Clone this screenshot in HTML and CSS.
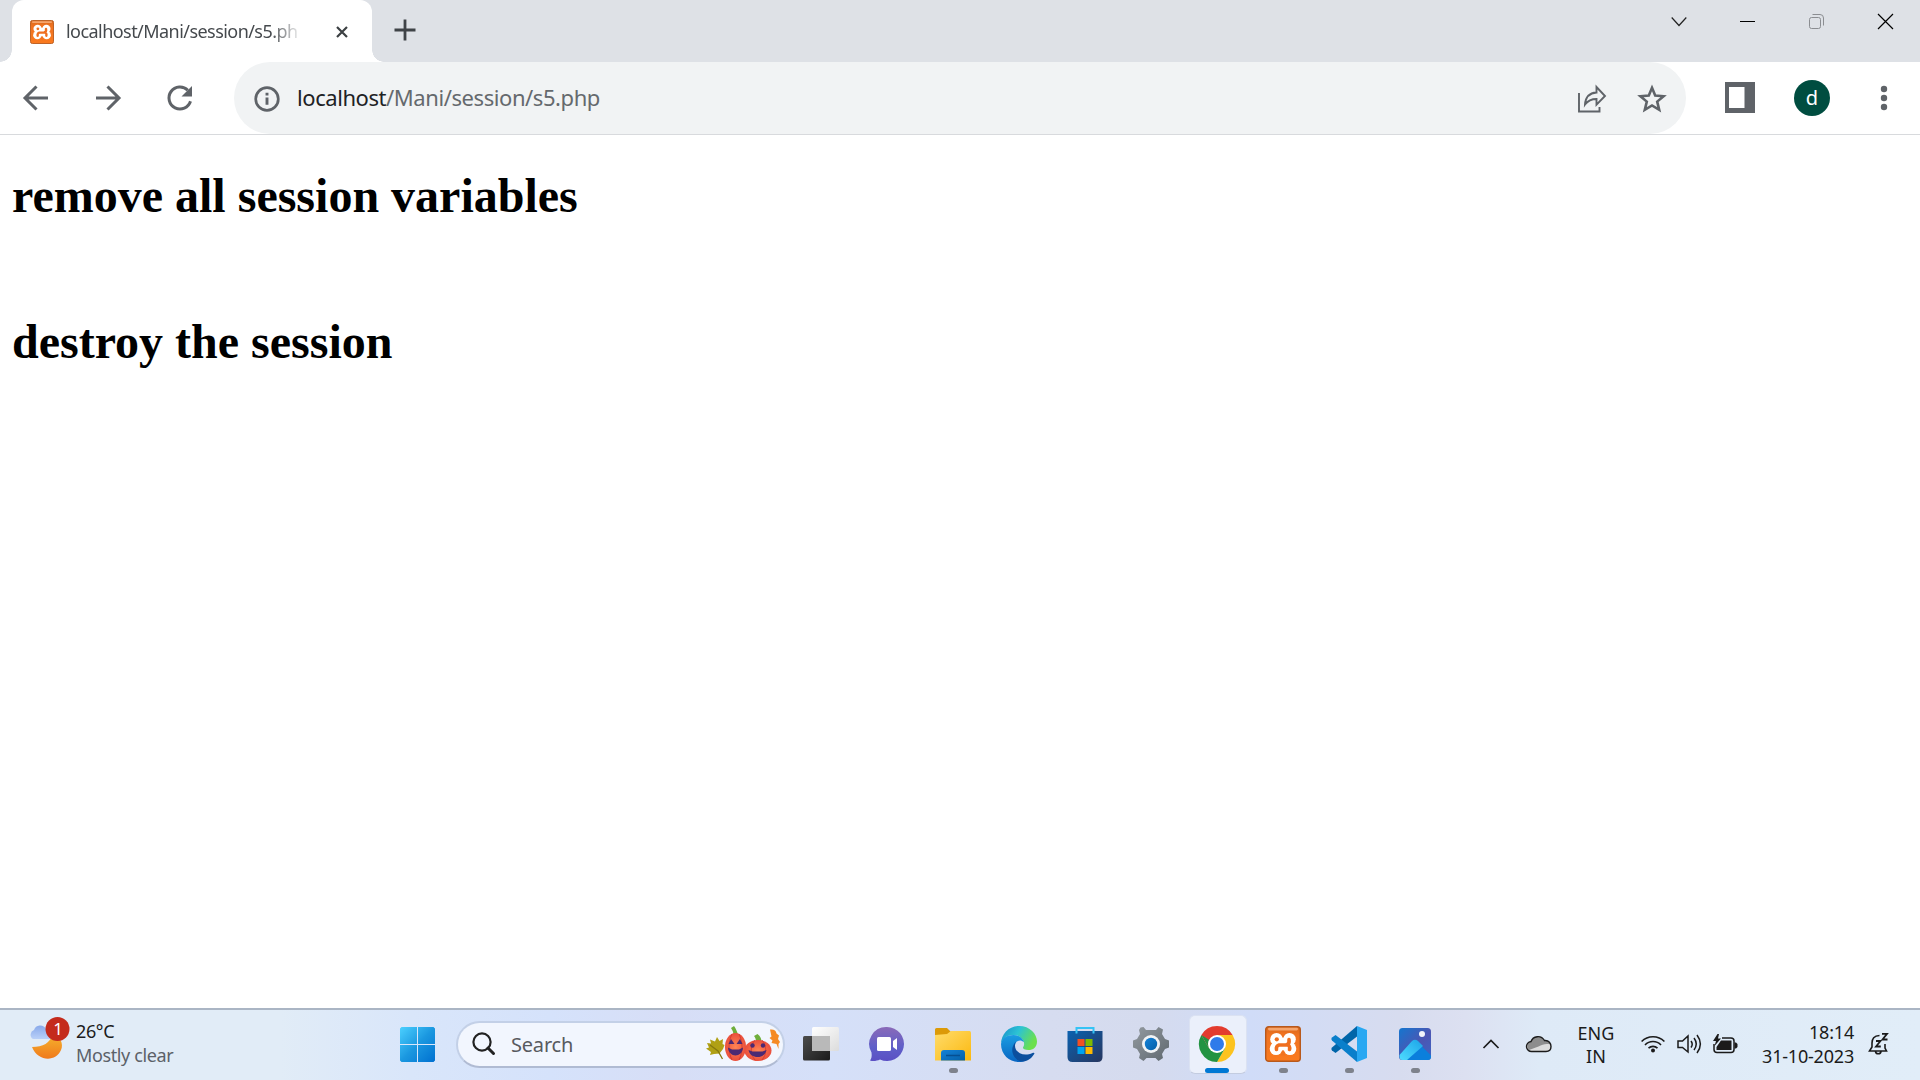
FILE: index.html
```html
<!DOCTYPE html>
<html lang="en">
<head>
<meta charset="utf-8">
<title>localhost/Mani/session/s5.php</title>
<link rel="stylesheet" href="styles.css">
</head>
<body>
<svg class="defs" width="0" height="0">
  <defs>
    <linearGradient id="orange" x1="0" y1="0" x2="0" y2="1"><stop offset="0" stop-color="#d9691c"/><stop offset=".25" stop-color="#f07321"/><stop offset="1" stop-color="#fa7a1e"/></linearGradient>
    <linearGradient id="moon" x1="0" y1="0" x2="0" y2="1"><stop offset="0" stop-color="#f5b52e"/><stop offset="1" stop-color="#f07a1c"/></linearGradient>
    <linearGradient id="cloud" x1="0" y1="0" x2="0" y2="1"><stop offset="0" stop-color="#89a9ea"/><stop offset="1" stop-color="#b9d0f8"/></linearGradient>
    <linearGradient id="win" gradientUnits="userSpaceOnUse" x1="0" y1="0" x2="35" y2="35"><stop offset="0" stop-color="#4bd0ff"/><stop offset=".5" stop-color="#1b98e0"/><stop offset="1" stop-color="#0070d0"/></linearGradient>
    <linearGradient id="dark" x1="0" y1="0" x2="1" y2="1"><stop offset="0" stop-color="#4c4c4c"/><stop offset="1" stop-color="#1b1b1b"/></linearGradient>
    <linearGradient id="light" x1="0" y1="0" x2="1" y2="1"><stop offset="0" stop-color="#fff"/><stop offset="1" stop-color="#dcdcdc"/></linearGradient>
    <linearGradient id="chat" x1="0" y1="0" x2="0" y2="1"><stop offset="0" stop-color="#8a6ab8"/><stop offset=".6" stop-color="#5f5fc9"/><stop offset="1" stop-color="#5b50c4"/></linearGradient>
    <linearGradient id="folder" x1="0" y1="0" x2="1" y2="1"><stop offset="0" stop-color="#ffdc6b"/><stop offset="1" stop-color="#fbb80f"/></linearGradient>
    <linearGradient id="blue" x1="0" y1="0" x2="1" y2="1"><stop offset="0" stop-color="#1482d8"/><stop offset="1" stop-color="#0560a8"/></linearGradient>
    <linearGradient id="edgeTop" x1="0" y1="0" x2="1" y2=".4"><stop offset="0" stop-color="#168ccc"/><stop offset=".5" stop-color="#2cc3d4"/><stop offset="1" stop-color="#6be04d"/></linearGradient>
    <linearGradient id="edgeLow" x1="0" y1="0" x2="0" y2="1"><stop offset="0" stop-color="#1b9de2"/><stop offset="1" stop-color="#0865c2"/></linearGradient>
    <linearGradient id="store" x1="0" y1="0" x2="1" y2="1"><stop offset="0" stop-color="#0b62b0"/><stop offset="1" stop-color="#27365f"/></linearGradient>
    <linearGradient id="gear" x1="0" y1="0" x2="1" y2="1"><stop offset="0" stop-color="#939aa0"/><stop offset="1" stop-color="#5f686f"/></linearGradient>
    <linearGradient id="photo" x1="0" y1="0" x2="1" y2="1"><stop offset="0" stop-color="#1476cf"/><stop offset=".55" stop-color="#4c56b3"/><stop offset="1" stop-color="#3d64c4"/></linearGradient>
    <linearGradient id="peak" x1="0" y1="1" x2="1" y2="0"><stop offset="0" stop-color="#4fdcff"/><stop offset="1" stop-color="#1ba3e8"/></linearGradient>
    <radialGradient id="pumpkin"><stop offset="0" stop-color="#ff8554"/><stop offset="1" stop-color="#ea4f3c"/></radialGradient>
    <symbol id="xampp" viewBox="0 0 36 36">
      <rect x=".7" y=".7" width="34.6" height="34.6" rx="3" fill="url(#orange)" stroke="#b8591c" stroke-width="1.4"/>
      <rect x="3" y="1.8" width="30" height="2.6" rx="1.3" fill="#f6a56c"/>
      <g fill="#fff"><circle cx="11.500" cy="13.300" r="6.300"/><circle cx="24.500" cy="13.300" r="6.300"/><circle cx="11" cy="22.700" r="6.300"/><circle cx="25" cy="22.700" r="6.300"/><path d="M12 11.500h12v13H12z"/></g>
      <circle cx="11.800" cy="13.300" r="2.100" fill="#ef6f1f"/>
      <path d="M11.500 23.500c-.5-2 .5-4 2.500-4.500h7.500c2-.5 3-2.500 2.500-5.500M22 18.500c2 .5 3.200 2.500 2.500 5" fill="none" stroke="#ef6f1f" stroke-width="3.600" stroke-linecap="round"/>
      <path d="M15.500 6.500h5L18 12zM15.500 29.500h5L18 24z" fill="#f07321"/>
    </symbol>
  </defs>
</svg>

<header class="tabstrip">
  <div class="tab">
    <svg class="favicon" width="24" height="24"><use href="#xampp"/></svg>
    <span class="tab-title">localhost/Mani/session/s5.ph</span>
    <svg class="tab-close" width="12" height="12" viewBox="0 0 12 12"><path d="M1 1l10 10M11 1L1 11" stroke="#3c4043" stroke-width="2.200"/></svg>
  </div>
  <svg class="new-tab" width="22" height="22" viewBox="0 0 22 22"><path d="M11 .5v21M.5 11h21" stroke="#3f4347" stroke-width="2.800"/></svg>
  <div class="window-controls">
    <svg width="16" height="16" viewBox="0 0 16 16"><path d="M.7 3.500l7.300 8 7.300-8" fill="none" stroke="#222" stroke-width="1.200"/></svg>
    <svg width="16" height="16" viewBox="0 0 16 16"><path d="M0 7.500h15" stroke="#000"/></svg>
    <svg width="16" height="16" viewBox="0 0 16 16"><rect x=".5" y="3.500" width="11" height="11" rx="2" fill="none" stroke="#8b8d91"/><path d="M3.500 .5h7.500a3.500 3.500 0 0 1 3.500 3.500v7.500" fill="none" stroke="#8b8d91"/></svg>
    <svg width="16" height="16" viewBox="0 0 16 16"><path d="M0 0l15 15M15 0L0 15" stroke="#000" stroke-width="1.200"/></svg>
  </div>
</header>

<nav class="toolbar">
  <div class="nav-buttons">
    <svg width="26" height="26" viewBox="0 0 26 26"><path d="M25 13H2.500M13.500 1.500L2 13l11.500 11.500" fill="none" stroke="#5f6368" stroke-width="3"/></svg>
    <svg width="26" height="26" viewBox="0 0 26 26"><path d="M1 13h22.500M12.500 1.500L24 13 12.500 24.500" fill="none" stroke="#5f6368" stroke-width="3"/></svg>
    <svg width="26" height="26" viewBox="0 0 26 26"><path d="M23.500 16.200A11 11 0 1 1 20.800 5.200" fill="none" stroke="#5f6368" stroke-width="3"/><path d="M25 1v10.500H14.500z" fill="#5f6368"/></svg>
  </div>
  <div class="omnibox">
    <svg width="26" height="26" viewBox="0 0 26 26"><circle cx="13" cy="13" r="11.300" fill="none" stroke="#5f6368" stroke-width="2.700"/><path d="M13 11.500v7.300M13 6.800v2.700" stroke="#5f6368" stroke-width="2.900"/></svg>
    <span class="url"><b>localhost</b>/Mani/session/s5.php</span>
    <svg class="share" width="30" height="28" viewBox="0 0 30 28"><path d="M2 8v18.500h20.500V22M8 19.500C8.500 12 12 8 19.500 7.500V2L28 11l-8.500 8.700V14C14 14 11 15.500 8 19.500z" fill="none" stroke="#5f6368" stroke-width="1.900"/></svg>
    <svg class="star" width="28" height="28" viewBox="0 0 28 28"><path d="M14 2.800l3.200 7.700 8.400.7-6.400 5.400 2 8.200L14 20.400l-7.200 4.400 2-8.200-6.400-5.400 8.400-.7z" fill="none" stroke="#5f6368" stroke-width="2.600"/></svg>
  </div>
  <svg class="panel" width="30" height="31" viewBox="0 0 30 31"><path fill-rule="evenodd" d="M0 0h30v31H0zM4 5v21h15.500V5z" fill="#5f6368"/></svg>
  <span class="avatar">d</span>
  <svg class="menu" width="8" height="26" viewBox="0 0 8 26"><g fill="#5f6368"><circle cx="4" cy="4" r="3.200"/><circle cx="4" cy="13" r="3.200"/><circle cx="4" cy="22" r="3.200"/></g></svg>
</nav>

<main class="page">
  <h1>remove all session variables</h1>
  <h1>destroy the session</h1>
</main>

<footer class="taskbar">
  <div class="weather">
    <svg width="42" height="42" viewBox="0 0 42 42"><path d="M4 22a5 5 0 0 1 1-9 6.500 6.500 0 0 1 12-1 6 6 0 0 1 6 10z" fill="url(#cloud)"/><path d="M3 30c11 0 18-4 21-13 7 2 11 10 8 16-5 12-23 12-29-3z" fill="url(#moon)"/><circle cx="28.500" cy="12" r="12" fill="#c42b1c"/></svg>
    <span class="badge">1</span>
    <div class="weather-text"><span class="t-temp">26°C</span><span class="t-sky">Mostly clear</span></div>
  </div>

  <svg class="start" width="35" height="35" viewBox="0 0 35 35"><path d="M1.500 0H17v17H0V1.500zM18 0h15.500L35 1.500V17H18zM0 18h17v17H1.500L0 33.500zM18 18h17v15.500L33.500 35H18z" fill="url(#win)"/></svg>

  <div class="search">
    <svg width="23" height="23" viewBox="0 0 23 23"><circle cx="10" cy="10" r="8.600" fill="none" stroke="#222" stroke-width="2.200"/><path d="M16 16l5.500 5.500" stroke="#222" stroke-width="3" stroke-linecap="round"/></svg>
    <span class="t-search">Search</span>
    <svg class="pumpkins" width="74" height="36" viewBox="0 0 74 36">
      <path d="M1 17l4 .5-1-4 5 2 2-4.500 2.500 4 3.500-2-.5 5 2 1-1.500 4-3.500 4.500-5.500.5-4 1 1-3-5-3.500 3-1z" fill="#b0a015"/><path d="M4 19l8 6 4.500 8" fill="none" stroke="#86790f" stroke-width="1.300"/>
      <path d="M27 9c1-3-1-5-2-7l3-2c2 3 3 5 4 9z" fill="#6fae3b"/>
      <ellipse cx="29.500" cy="21" rx="10.500" ry="14" fill="url(#pumpkin)"/><path d="M26 8c-4 8-4 18 0 26M33 8c4 8 4 18 0 26" fill="none" stroke="#c8322d" stroke-width=".7"/>
      <path d="M22.500 18l2.500-5 3.500 5zM30.500 18l3.500-5 2.500 5zM22 21.500l4 2h7l4-2c0 5-4 8-7.500 8S22 26 22 21.500z" fill="#4c2a73"/>
      <path d="M50 16c0-3-1-5-2-6l3.500-2c3 2 4 5 4 8z" fill="#6fae3b"/>
      <ellipse cx="52" cy="24.500" rx="13.500" ry="10.500" fill="url(#pumpkin)"/><path d="M49 14c-5 6-5 14 0 20M56 14c5 6 5 14 0 20" fill="none" stroke="#c8322d" stroke-width=".7"/>
      <circle cx="46.500" cy="19.500" r="2.200" fill="#4c2a73"/><circle cx="57" cy="19.500" r="2.200" fill="#4c2a73"/><path d="M42.500 24l4 1.500h10l4-1.500c-1 5-5 7-9 7s-8-2-9-7z" fill="#4c2a73"/>
      <path d="M72.500 23l-2-5-5-1 1-2.500-3-2.500 2-1.500L64 3.500c4-.5 6 1 6.500 4l2.500 2-1 3.500 2 3-1.500 2z" fill="#f58a24"/>
    </svg>
  </div>

  <div class="apps">
    <div class="app"><svg width="36" height="36" viewBox="0 0 36 36"><rect y="10" width="27" height="24.500" rx="1.500" fill="url(#dark)"/><rect x="9" y="1" width="27" height="24" rx="1.500" fill="url(#light)"/><path d="M9 10h18v15H9z" fill="#b9b9b9"/></svg></div>
    <div class="app"><svg width="36" height="36" viewBox="0 0 36 36"><path d="M18 1a17 17 0 1 1-7 32.500C8 35 4 35.500 1 34.500c1.500-2 2-4 1.500-8A17 17 0 0 1 18 1z" fill="url(#chat)"/><rect x="8" y="11" width="14" height="14" rx="1.500" fill="#fff"/><path d="M24 15l4-3v12l-4-3z" fill="#fff"/></svg></div>
    <div class="app running"><svg width="36" height="36" viewBox="0 0 36 36"><path d="M0 3.500Q0 2 1.500 2H12l4 4h18v4H0z" fill="#dc9a08"/><path d="M0 9l12-1 4-3h18.500Q36 5 36 7v27.500H0z" fill="url(#folder)"/><path d="M6 34.500V27q0-3 3-3h18q3 0 3 3v7.500z" fill="url(#blue)"/><path d="M11 29.500h14" stroke="#064f91" stroke-width="1.500"/></svg></div>
    <div class="app"><svg width="36" height="36" viewBox="0 0 36 36"><path d="M0 18C0 8 8 0 18 0c11 0 18 8 18 15.500 0 6-4 8.500-8.500 8.500-5 0-6.500-1.500-5-3.500C25 16 20 9 12.500 9 5 9 1 14 0 18z" fill="url(#edgeTop)"/><path d="M0 18C1 12 6 9 12.500 9c6 0 9.500 4 10.500 7-5-4-10 0-9.500 7C14 30 20 33.500 25 34.500 14 39.500 0 32 0 18z" fill="url(#edgeLow)"/><path d="M15 15.500C6.500 24 14 36 22 35.500c5-.5 9-3.500 11.500-8-.3-1-1-1-2-.5C23 31 14 27 14 19.500q0-2.500 1-4z" fill="#0b4f9e"/></svg></div>
    <div class="app"><svg width="36" height="36" viewBox="0 0 36 36"><path d="M.5 5h35v26q0 5-5 5h-25q-5 0-5-5z" fill="url(#store)"/><path d="M9.500 7.500V2h17v5.500" fill="none" stroke="#35c3f5" stroke-width="2"/><path d="M10.500 13h7v7h-7z" fill="#f25022"/><path d="M18.500 13h7v7h-7z" fill="#7fba00"/><path d="M10.500 21h7v7h-7z" fill="#00a4ef"/><path d="M18.500 21h7v7h-7z" fill="#ffb900"/></svg></div>
    <div class="app"><svg width="36" height="36" viewBox="0 0 36 36"><path d="M7.500 1.500l3-.5 2.500 3h10l2.500-3 4.500 2.500-1 4.500 3 5 4 1.500v7L32 23l-3 5 1 4-4.500 3-3-3h-9l-3 3L6 32l1-4-3-5-4-1.500v-7L4 13l3-5-1-4z" fill="url(#gear)"/><circle cx="18" cy="18" r="9" fill="#f1f3f5"/><circle cx="18" cy="18" r="6.200" fill="url(#blue)"/></svg></div>
    <div class="app active"><svg width="36" height="36" viewBox="0 0 36 36"><path d="M18 18L2.400 9a18 18 0 0 1 31.200 0z" fill="#e33b2e"/><path d="M18 18V9h15.600A18 18 0 0 1 18 36l7.800-13.500z" fill="#fcc31e"/><path d="M18 18l7.800 4.500L18 36A18 18 0 0 1 2.400 9l7.800 13.500z" fill="#229342"/><path d="M2.400 9h31.200H18a9 9 0 0 0-7.800 4.500v9z" fill="#e33b2e"/><path d="M2.400 9l7.800 13.500L12 15z" fill="#229342"/><circle cx="18" cy="18" r="9" fill="#fff"/><circle cx="18" cy="18" r="7" fill="#2f7bea"/></svg></div>
    <div class="app running"><svg width="36" height="36"><use href="#xampp"/></svg></div>
    <div class="app running"><svg width="36" height="36" viewBox="0 0 36 36"><path d="M26 0v10.500L4.500 27 1 24.500Q-.5 23 1 21.500z" fill="#0065a9"/><path d="M26 36V25.500L4.500 9 1 11.500Q-.5 13 1 14.500z" fill="#0a7fcb"/><path d="M26 0l10 4v28l-10 4z" fill="#29a8f2"/></svg></div>
    <div class="app running"><svg width="32" height="32" viewBox="0 0 32 32"><rect width="32" height="32" rx="3.500" fill="url(#photo)"/><path d="M6 32L20 18.500q2-1 4 1l8 8v1Q32 32 28.500 32z" fill="#0b7fdc"/><path d="M.5 27L13 13q3-2.500 6 0l5 5L8 32H3.500Q0 32 .5 27z" fill="url(#peak)"/><circle cx="23" cy="6" r="3" fill="#f2f4fb"/></svg></div>
  </div>

  <div class="tray">
    <svg class="up" width="18" height="12" viewBox="0 0 18 12"><path d="M1.500 10L9 2.500l7.500 7.500" fill="none" stroke="#1b1b1b" stroke-width="1.700"/></svg>
    <svg class="onedrive" width="26" height="18" viewBox="0 0 26 18"><path d="M6 16.500a5 5 0 0 1-1-10C7 1 15-.5 18.500 5.500 23 5 25 8.500 25 11.500s-2 5-5 5z" fill="#dcdcdc"/><path d="M5 6.500C7 1 15-.5 18.500 5.500c3 0 5 1 6 4-5-1-8 0-12 2L3 15C.5 12 1 8 5 6.500z" fill="#8d8d8d"/><path d="M6 16.500a5 5 0 0 1-1-10C7 1 15-.5 18.500 5.500 23 5 25 8.500 25 11.500s-2 5-5 5z" fill="none" stroke="#1b1b1b" stroke-width="1.400"/></svg>
    <div class="lang"><span>ENG</span><span>IN</span></div>
    <svg class="wifi" width="24" height="18" viewBox="0 0 24 18"><g fill="none" stroke="#1b1b1b" stroke-width="1.600"><path d="M.6 6.500a16 16 0 0 1 22.800 0M4 10a11 11 0 0 1 16 0M7.500 13.200a6.500 6.500 0 0 1 9 0"/></g><circle cx="12" cy="15.500" r="2" fill="#1b1b1b"/></svg>
    <svg class="volume" width="24" height="20" viewBox="0 0 24 20"><path d="M1 7v6.500h4.500L11 18V2L5.500 7zM14 7c1.500 2 1.500 4.500 0 6.500M17 4c3 4 3 8 0 12M20 1c4.500 6 4.500 12 0 18" fill="none" stroke="#1b1b1b" stroke-width="1.500"/></svg>
    <svg class="battery" width="25" height="20" viewBox="0 0 25 20"><path d="M9 4h9q3 0 3 3v8.500q0 3-3 3H4q-3 0-3-3V10" fill="none" stroke="#1b1b1b" stroke-width="1.500"/><path d="M3.500 16v-3l4.500-6.500H18.500V16zM21.500 8.500h1.500l1.500 1.500v3L23 14.500h-1.500z" fill="#1b1b1b"/><path d="M4.500 0L0 7h3l-1.500 5L8 4.500H5L6 0z" fill="#1b1b1b"/></svg>
    <div class="clock"><span class="t-time">18:14</span><span class="t-date">31-10-2023</span></div>
    <svg class="bell" width="22" height="22" viewBox="0 0 22 22"><path d="M11.500 2.500C6 2.500 4 6 4 10v4l-2.500 4h17L17 15v-4M7.500 18.500c.5 3 5 3 5.500 0" fill="none" stroke="#1b1b1b" stroke-width="1.600"/><path d="M8 8h4.500L8 13.500h4.800M14 .8h5L14.500 6.500h5" fill="none" stroke="#1b1b1b" stroke-width="1.800"/></svg>
  </div>
</footer>
</body>
</html>
```
FILE: styles.css
```css
* { box-sizing: border-box; }
html, body { height: 100%; }
body { margin: 0; display: flex; flex-direction: column; width: 1920px; height: 1080px; overflow: hidden; background: #fff; font-family: "Noto Sans", "Open Sans", sans-serif; }
svg { display: block; flex: none; overflow: visible; }
.defs { position: absolute; }
span { white-space: nowrap; }

.tabstrip { display: flex; height: 62px; flex: none; background: #dee1e6; align-items: flex-start; }
.tab { position: relative; display: flex; align-items: center; width: 360px; height: 62px; margin-left: 12px; padding: 2px 24px 0 18px; background: #fff; border-radius: 12px 12px 0 0; }
.tab::before, .tab::after { content: ""; position: absolute; bottom: 0; width: 12px; height: 12px; }
.tab::before { left: -12px; background: radial-gradient(circle at 0 0, transparent 11.5px, #fff 12px); }
.tab::after { right: -12px; background: radial-gradient(circle at 100% 0, transparent 11.5px, #fff 12px); }
.tab-title { width: 234px; margin-left: 12px; padding-bottom: 2px; overflow: hidden; font-size: 18px; letter-spacing: -0.55px; color: #45494d; -webkit-mask-image: linear-gradient(90deg, #000 205px, transparent 236px); }
.tab-close { margin-left: auto; }
.new-tab { margin: 19px 0 0 22px; }
.window-controls { display: flex; margin-left: auto; width: 275px; padding-top: 14px; }
.window-controls svg { margin: 0 27px 0 26px; }

.toolbar { display: flex; align-items: center; height: 73px; flex: none; border-bottom: 1px solid #d8dadd; }
.nav-buttons { display: flex; gap: 46px; width: 234px; padding: 0 0 1px 23px; }
.omnibox { display: flex; align-items: center; width: 1452px; height: 72px; padding: 1px 20px 0; border-radius: 36px; background: #f1f3f4; }
.url { margin-left: 17px; padding-bottom: 3px; font-size: 22px; letter-spacing: -0.43px; color: #65696d; }
.url b { font-weight: 400; color: #202124; }
.share { margin-left: auto; }
.star { margin-left: 31px; }
.panel { margin: 0 0 1px 39px; }
.avatar { width: 36px; height: 36px; margin-left: 39px; border-radius: 50%; background: #004d40; color: #fff; font-size: 20px; line-height: 35px; text-align: center; }
.menu { margin: 0 0 1px 50px; }

.page { flex: 1; padding: 0 12px; font-family: "Liberation Serif", serif; color: #000; }
.page h1 { margin: 33px 0 90px; font-size: 48px; line-height: 56px; font-weight: 700; }

.taskbar { display: flex; align-items: center; flex: none; height: 72px; border-top: 2px solid #aab5c4; background: linear-gradient(90deg, #e1ecf7 0, #e1ecf7 280px, #d9e6fa 410px, #d5e2fb 550px, #d7def6 670px, #d5e0f9 830px, #d6dcf0 1050px, #d5dbee 1150px, #d0dcf8 1250px, #d7dcef 1400px, #dce0f1 1465px, #deeaf7 1540px, #e1edf8 1920px); color: #1b1b1b; font-size: 18px; }
.weather { position: relative; display: flex; width: 400px; height: 70px; padding: 7px 0 0 29px; }
.badge { position: absolute; left: 46px; top: 7px; width: 24px; color: #fff; font-size: 17px; line-height: 24px; text-align: center; }
.weather-text, .clock, .lang { display: flex; flex-direction: column; line-height: 24px; }
.weather-text { margin: 2px 0 0 5px; letter-spacing: -0.38px; }
.t-sky { color: #5b6168; }
.start { margin-bottom: 1px; }
.search { display: flex; align-items: center; width: 329px; height: 47px; margin: 0 0 2px 21px; padding: 0 3px 2px 14px; border: 2px solid #c3d0e7; border-bottom-color: #b0bbd3; border-radius: 24px; background: #f2f6fe; }
.t-search { margin-left: 16px; padding-top: 2px; font-size: 20px; letter-spacing: -0.2px; color: #585a5e; }
.pumpkins { margin: 2px 0 0 auto; }
.apps { display: flex; margin-left: 3px; }
.app { position: relative; display: flex; align-items: center; justify-content: center; width: 66px; height: 70px; padding-bottom: 2px; }
.app svg { position: relative; }
.running::after, .active::after { content: ""; position: absolute; bottom: 7px; width: 9px; height: 5px; border-radius: 3px; background: #7e828c; }
.active::before { content: ""; position: absolute; left: 5px; top: 5px; width: 56px; height: 57px; border-radius: 6px; background: #ebf0fb; border: 1px solid #dbe2f2; border-bottom-color: #c3cce0; }
.active::after { width: 24px; background: #0078d4; }
.tray { display: flex; align-items: center; height: 70px; margin-left: 34px; padding-bottom: 2px; }
.onedrive { margin-left: 26px; }
.lang { align-items: center; width: 50px; margin: 1px 0 0 19px; line-height: 23px; }
.wifi { margin-left: 20px; }
.volume { margin-left: 12px; }
.battery { margin-left: 12px; }
.clock { align-items: flex-end; width: 100px; margin: -1px 0 0 16px; letter-spacing: -0.2px; }
.bell { margin-left: 14px; }
```
